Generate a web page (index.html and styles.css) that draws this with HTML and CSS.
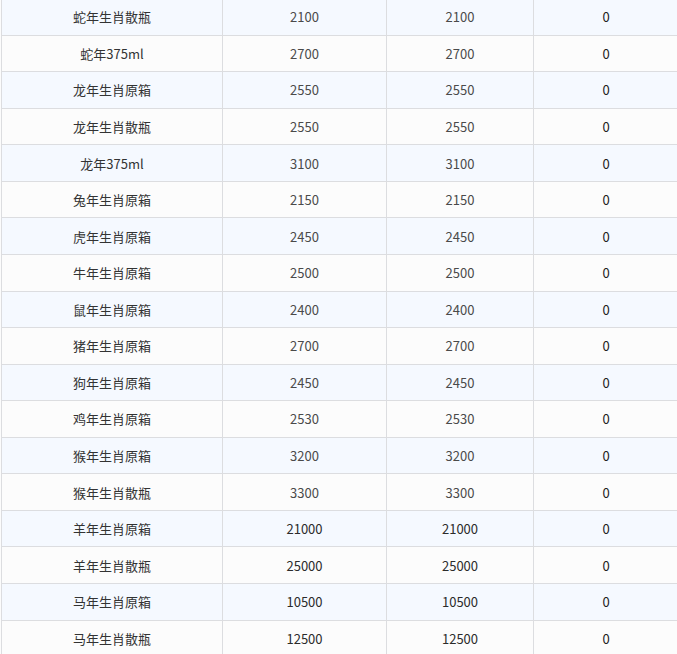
FILE: index.html
```html
<!DOCTYPE html>
<html>
<head>
<meta charset="utf-8">
<link rel="stylesheet" href="styles.css">
</head>
<body>
<div class="table">
  <div class="row stripe"><div class="cell c1">蛇年生肖散瓶</div><div class="cell c2 soft">2100</div><div class="cell c3 soft">2100</div><div class="cell c4">0</div></div>
  <div class="row"><div class="cell c1">蛇年375ml</div><div class="cell c2 soft">2700</div><div class="cell c3 soft">2700</div><div class="cell c4">0</div></div>
  <div class="row stripe"><div class="cell c1">龙年生肖原箱</div><div class="cell c2 soft">2550</div><div class="cell c3 soft">2550</div><div class="cell c4">0</div></div>
  <div class="row"><div class="cell c1">龙年生肖散瓶</div><div class="cell c2 soft">2550</div><div class="cell c3 soft">2550</div><div class="cell c4">0</div></div>
  <div class="row stripe"><div class="cell c1">龙年375ml</div><div class="cell c2 soft">3100</div><div class="cell c3 soft">3100</div><div class="cell c4">0</div></div>
  <div class="row"><div class="cell c1">兔年生肖原箱</div><div class="cell c2 soft">2150</div><div class="cell c3 soft">2150</div><div class="cell c4">0</div></div>
  <div class="row stripe"><div class="cell c1">虎年生肖原箱</div><div class="cell c2 soft">2450</div><div class="cell c3 soft">2450</div><div class="cell c4">0</div></div>
  <div class="row"><div class="cell c1">牛年生肖原箱</div><div class="cell c2 soft">2500</div><div class="cell c3 soft">2500</div><div class="cell c4">0</div></div>
  <div class="row stripe"><div class="cell c1">鼠年生肖原箱</div><div class="cell c2 soft">2400</div><div class="cell c3 soft">2400</div><div class="cell c4">0</div></div>
  <div class="row"><div class="cell c1">猪年生肖原箱</div><div class="cell c2 soft">2700</div><div class="cell c3 soft">2700</div><div class="cell c4">0</div></div>
  <div class="row stripe"><div class="cell c1">狗年生肖原箱</div><div class="cell c2 soft">2450</div><div class="cell c3 soft">2450</div><div class="cell c4">0</div></div>
  <div class="row"><div class="cell c1">鸡年生肖原箱</div><div class="cell c2 soft">2530</div><div class="cell c3 soft">2530</div><div class="cell c4">0</div></div>
  <div class="row stripe"><div class="cell c1">猴年生肖原箱</div><div class="cell c2 soft">3200</div><div class="cell c3 soft">3200</div><div class="cell c4">0</div></div>
  <div class="row"><div class="cell c1">猴年生肖散瓶</div><div class="cell c2 soft">3300</div><div class="cell c3 soft">3300</div><div class="cell c4">0</div></div>
  <div class="row stripe"><div class="cell c1">羊年生肖原箱</div><div class="cell c2">21000</div><div class="cell c3">21000</div><div class="cell c4">0</div></div>
  <div class="row"><div class="cell c1">羊年生肖散瓶</div><div class="cell c2">25000</div><div class="cell c3">25000</div><div class="cell c4">0</div></div>
  <div class="row stripe"><div class="cell c1">马年生肖原箱</div><div class="cell c2">10500</div><div class="cell c3">10500</div><div class="cell c4">0</div></div>
  <div class="row"><div class="cell c1">马年生肖散瓶</div><div class="cell c2">12500</div><div class="cell c3">12500</div><div class="cell c4">0</div></div>
</div>
</body>
</html>
```
FILE: styles.css
```css
html, body {
  margin: 0;
  padding: 0;
  background: #fcfcfc;
  overflow: hidden;
}
body {
  font-family: "Noto Sans CJK SC", "Noto Sans", sans-serif;
  font-size: 13px;
  color: #2b2b2b;
}
.table {
  margin-top: -1px;
  margin-left: 1px;
  width: 678px;
  border-left: 1px solid #dcdde0;
}
.row {
  display: grid;
  grid-template-columns: 221px 164px 147px 145px;
  height: 36.5625px;
  box-sizing: border-box;
  border-bottom: 1px solid #dcdde0;
  background: #fcfcfc;
}
.row.stripe {
  background: #f5f9ff;
}
.cell {
  display: flex;
  align-items: center;
  justify-content: center;
  border-right: 1px solid #dcdde0;
  line-height: 1;
}
.c1 { color: #333333; }
.soft { color: #4a4a4a; }
.c4 { color: #222222; }
```
